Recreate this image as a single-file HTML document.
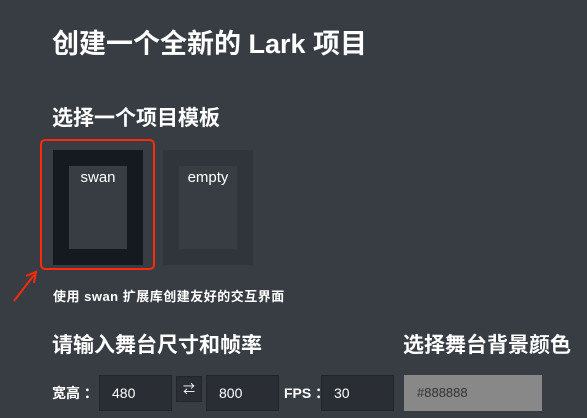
<!DOCTYPE html>
<html><head><meta charset="utf-8"><style>
html,body{margin:0;padding:0}
body{width:587px;height:418px;background:#383d44;position:relative;overflow:hidden;font-family:"Liberation Sans","Noto Sans CJK SC",sans-serif;color:#fff}
.a{position:absolute;white-space:nowrap}
.h1{left:52px;top:27px;font-size:27px;font-weight:bold;line-height:34px}
.h2{font-size:21px;font-weight:bold;line-height:26px}
.card{position:absolute;width:90px;height:115px;top:150px}
.inner{position:absolute;left:16px;top:16px;width:58px;height:83px;background:#383d44;font-size:15px;text-align:center;line-height:24px}
.inp{position:absolute;top:375px;height:36px;background:#2a2e34;border:1px solid #22262b;box-sizing:border-box;font-size:14px;line-height:34px;padding-left:12px;color:#fff}
.lbl{position:absolute;top:375px;line-height:36px;font-size:14px;font-weight:bold}
</style></head><body>
<div class="a h1">创建一个全新的 Lark 项目</div>
<div class="a h2" style="left:52px;top:106px">选择一个项目模板</div>
<div class="a" style="left:40px;top:139px;width:111px;height:127px;border:2.5px solid #ff2a0a;border-radius:5px"></div>
<div class="card" style="left:53px;background:#151a21"><div class="inner">swan</div></div>
<div class="card" style="left:163px;background:#30353b"><div class="inner">empty</div></div>
<svg class="a" style="left:8px;top:266px" width="32" height="40"><line x1="6" y1="35" x2="26" y2="9" stroke="#ff2a0a" stroke-width="2"/><path d="M18 10 L28 6 L26 17" fill="none" stroke="#ff2a0a" stroke-width="2"/></svg>
<div class="a" style="left:53px;top:289px;font-size:13px;font-weight:bold;line-height:16px;letter-spacing:0.5px">使用 swan 扩展库创建友好的交互界面</div>
<div class="a h2" style="left:52px;top:333px">请输入舞台尺寸和帧率</div>
<div class="a h2" style="left:403px;top:333px">选择舞台背景颜色</div>
<div class="lbl" style="left:52px">宽高 ：</div>
<div class="inp" style="left:99px;width:73px">480</div>
<div class="inp" style="left:176px;width:26px;top:376px;height:26px;padding:0;text-align:center;line-height:24px;font-size:12px">⇄</div>
<div class="inp" style="left:206px;width:73px">800</div>
<div class="lbl" style="left:284px">FPS ：</div>
<div class="inp" style="left:321px;width:73px">30</div>
<div class="inp" style="left:404px;width:138px;background:#888;border-color:#888;color:#333;font-size:13px">#888888</div>
</body></html>
